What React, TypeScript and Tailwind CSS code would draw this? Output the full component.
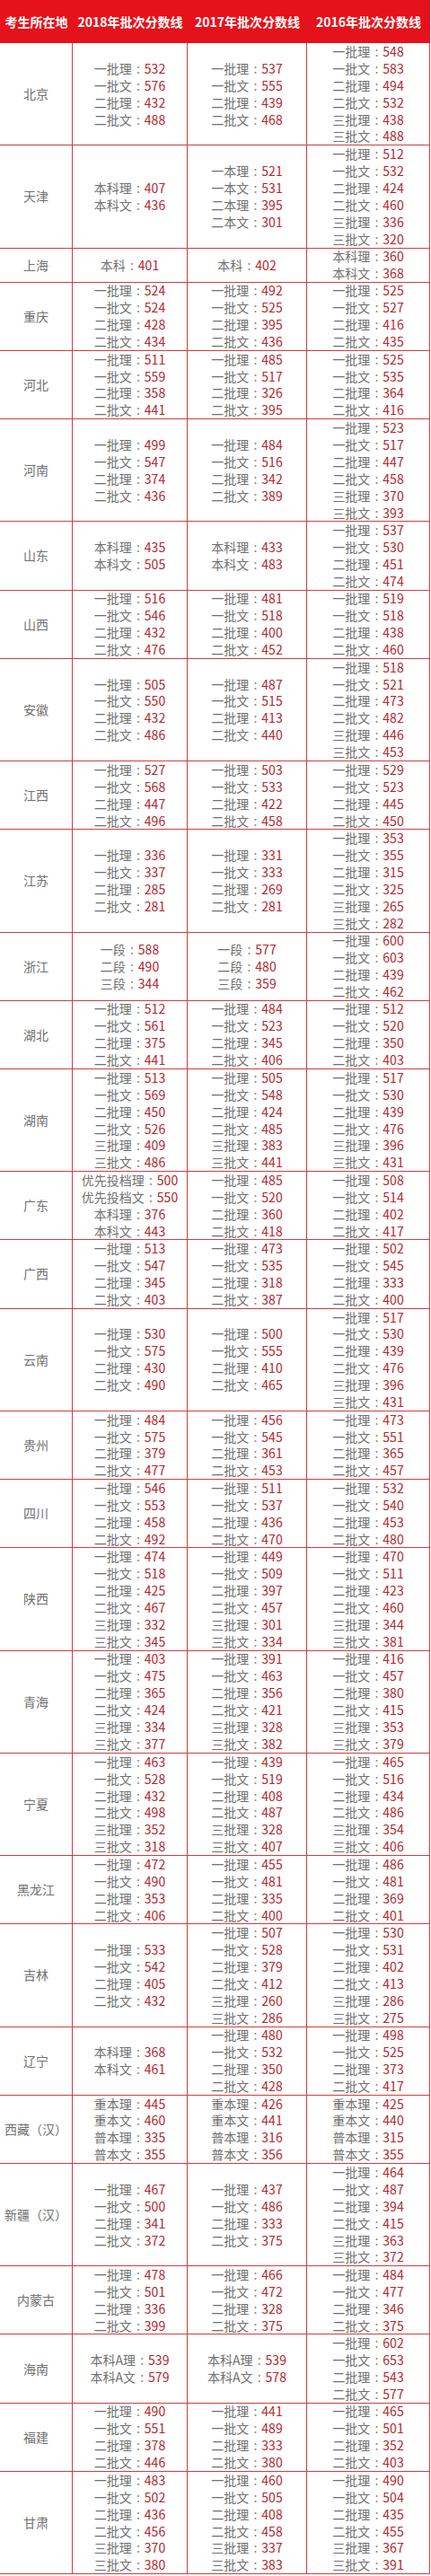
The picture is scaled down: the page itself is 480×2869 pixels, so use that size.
import React from 'react';

type Item = [string, string];
type Row = { name: string; lines: 2 | 4 | 6; cols: [Item[], Item[], Item[]] };

const L = ['一批理', '一批文', '二批理', '二批文', '三批理', '三批文'];
const std = (...v: number[]): Item[] => v.map((n, i) => [L[i], String(n)]);
const kv = (...p: (string | number)[]): Item[] => {
  const out: Item[] = [];
  for (let i = 0; i < p.length; i += 2) out.push([String(p[i]), String(p[i + 1])]);
  return out;
};

const rows: Row[] = [
  { name: '北京', lines: 6, cols: [std(532, 576, 432, 488), std(537, 555, 439, 468), std(548, 583, 494, 532, 438, 488)] },
  { name: '天津', lines: 6, cols: [kv('本科理', 407, '本科文', 436), kv('一本理', 521, '一本文', 531, '二本理', 395, '二本文', 301), std(512, 532, 424, 460, 336, 320)] },
  { name: '上海', lines: 2, cols: [kv('本科', 401), kv('本科', 402), kv('本科理', 360, '本科文', 368)] },
  { name: '重庆', lines: 4, cols: [std(524, 524, 428, 434), std(492, 525, 395, 436), std(525, 527, 416, 435)] },
  { name: '河北', lines: 4, cols: [std(511, 559, 358, 441), std(485, 517, 326, 395), std(525, 535, 364, 416)] },
  { name: '河南', lines: 6, cols: [std(499, 547, 374, 436), std(484, 516, 342, 389), std(523, 517, 447, 458, 370, 393)] },
  { name: '山东', lines: 4, cols: [kv('本科理', 435, '本科文', 505), kv('本科理', 433, '本科文', 483), std(537, 530, 451, 474)] },
  { name: '山西', lines: 4, cols: [std(516, 546, 432, 476), std(481, 518, 400, 452), std(519, 518, 438, 460)] },
  { name: '安徽', lines: 6, cols: [std(505, 550, 432, 486), std(487, 515, 413, 440), std(518, 521, 473, 482, 446, 453)] },
  { name: '江西', lines: 4, cols: [std(527, 568, 447, 496), std(503, 533, 422, 458), std(529, 523, 445, 450)] },
  { name: '江苏', lines: 6, cols: [std(336, 337, 285, 281), std(331, 333, 269, 281), std(353, 355, 315, 325, 265, 282)] },
  { name: '浙江', lines: 4, cols: [kv('一段', 588, '二段', 490, '三段', 344), kv('一段', 577, '二段', 480, '三段', 359), std(600, 603, 439, 462)] },
  { name: '湖北', lines: 4, cols: [std(512, 561, 375, 441), std(484, 523, 345, 406), std(512, 520, 350, 403)] },
  { name: '湖南', lines: 6, cols: [std(513, 569, 450, 526, 409, 486), std(505, 548, 424, 485, 383, 441), std(517, 530, 439, 476, 396, 431)] },
  { name: '广东', lines: 4, cols: [kv('优先投档理', 500, '优先投档文', 550, '本科理', 376, '本科文', 443), std(485, 520, 360, 418), std(508, 514, 402, 417)] },
  { name: '广西', lines: 4, cols: [std(513, 547, 345, 403), std(473, 535, 318, 387), std(502, 545, 333, 400)] },
  { name: '云南', lines: 6, cols: [std(530, 575, 430, 490), std(500, 555, 410, 465), std(517, 530, 439, 476, 396, 431)] },
  { name: '贵州', lines: 4, cols: [std(484, 575, 379, 477), std(456, 545, 361, 453), std(473, 551, 365, 457)] },
  { name: '四川', lines: 4, cols: [std(546, 553, 458, 492), std(511, 537, 436, 470), std(532, 540, 453, 480)] },
  { name: '陕西', lines: 6, cols: [std(474, 518, 425, 467, 332, 345), std(449, 509, 397, 457, 301, 334), std(470, 511, 423, 460, 344, 381)] },
  { name: '青海', lines: 6, cols: [std(403, 475, 365, 424, 334, 377), std(391, 463, 356, 421, 328, 382), std(416, 457, 380, 415, 353, 379)] },
  { name: '宁夏', lines: 6, cols: [std(463, 528, 432, 498, 352, 318), std(439, 519, 408, 487, 328, 407), std(465, 516, 434, 486, 354, 406)] },
  { name: '黑龙江', lines: 4, cols: [std(472, 490, 353, 406), std(455, 481, 335, 400), std(486, 481, 369, 401)] },
  { name: '吉林', lines: 6, cols: [std(533, 542, 405, 432), std(507, 528, 379, 412, 260, 286), std(530, 531, 402, 413, 286, 275)] },
  { name: '辽宁', lines: 4, cols: [kv('本科理', 368, '本科文', 461), std(480, 532, 350, 428), std(498, 525, 373, 417)] },
  {
    name: '西藏（汉）',
    lines: 4,
    cols: [
      kv('重本理', 445, '重本文', 460, '普本理', 335, '普本文', 355),
      kv('重本理', 426, '重本文', 441, '普本理', 316, '普本文', 356),
      kv('重本理', 425, '重本文', 440, '普本理', 315, '普本文', 355),
    ],
  },
  { name: '新疆（汉）', lines: 6, cols: [std(467, 500, 341, 372), std(437, 486, 333, 375), std(464, 487, 394, 415, 363, 372)] },
  { name: '内蒙古', lines: 4, cols: [std(478, 501, 336, 399), std(466, 472, 328, 375), std(484, 477, 346, 375)] },
  { name: '海南', lines: 4, cols: [kv('本科A理', 539, '本科A文', 579), kv('本科A理', 539, '本科A文', 578), std(602, 653, 543, 577)] },
  { name: '福建', lines: 4, cols: [std(490, 551, 378, 446), std(441, 489, 333, 380), std(465, 501, 352, 403)] },
  { name: '甘肃', lines: 6, cols: [std(483, 502, 436, 456, 370, 380), std(460, 505, 408, 458, 337, 383), std(490, 504, 435, 455, 367, 391)] },
];

const rowH: Record<number, string> = {
  2: 'h-[38.1px]',
  4: 'h-[76.2px]',
  6: 'h-[114.3px]',
};

const colW = ['w-[128px]', 'w-[133px]', 'w-[137px]'];

const Cell: React.FC<{ items: Item[]; width: string }> = ({ items, width }) => (
  <div className={`${width} shrink-0 border-r border-[#cf3f3f] flex flex-col justify-center items-center`}>
    {items.map(([label, val], i) => (
      <div key={i} className="leading-[18.9px] whitespace-nowrap">
        <span className="text-[#707070]">{label}</span>
        <span className="inline-block w-[14px] text-center text-[#8a8a8a]">:</span>
        <span className="text-[#b3262c]">{val}</span>
      </div>
    ))}
  </div>
);

export default function App() {
  return (
    <div className="w-[480px] bg-white font-['Noto_Sans_CJK_SC','Noto_Sans',sans-serif] text-[14px]">
      <div className="flex h-[48px] w-[479px] bg-[#e5121b] text-white font-bold text-[14px] items-center">
        <div className="w-[81px] shrink-0 text-center">考生所在地</div>
        <div className="w-[128px] shrink-0 text-center">2018年批次分数线</div>
        <div className="w-[133px] shrink-0 text-center">2017年批次分数线</div>
        <div className="w-[137px] shrink-0 text-center">2016年批次分数线</div>
      </div>
      {rows.map((r) => (
        <div key={r.name} className={`flex w-[479px] border-b border-[#cf3f3f] ${rowH[r.lines]}`}>
          <div className="w-[81px] shrink-0 border-r border-[#cf3f3f] flex items-center justify-center text-[#707070] whitespace-nowrap">
            {r.name}
          </div>
          {r.cols.map((c, i) => (
            <Cell key={i} items={c} width={colW[i]} />
          ))}
        </div>
      ))}
    </div>
  );
}
